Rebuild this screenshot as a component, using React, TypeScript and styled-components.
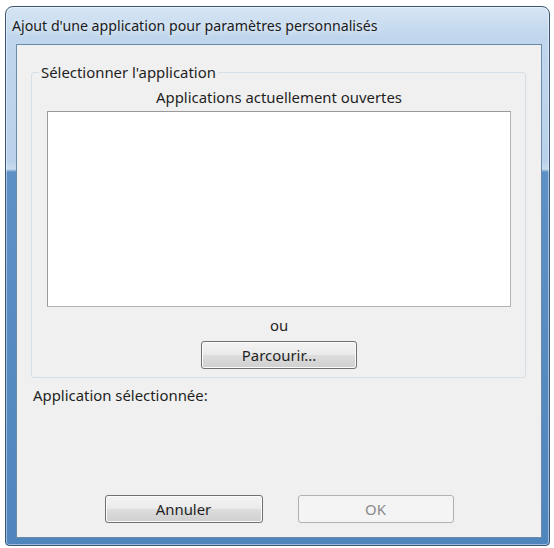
import React from "react";
import styled, { createGlobalStyle } from "styled-components";

const Global = createGlobalStyle`
  html, body { margin: 0; padding: 0; background: #ffffff; }
  body {
    font-family: "Noto Sans", "Open Sans", sans-serif;
    font-size: 14.9px;
    color: #1f1f1f;
  }
  * { box-sizing: border-box; }
`;

const Window = styled.div`
  margin: 6px 0 0 5px;
  width: 545px;
  height: 540px;
  border: 1px solid #3a5674;
  border-radius: 8px 8px 4px 4px;
  background: linear-gradient(
    to bottom,
    #d6e5f4 0px,
    #c0d6ec 30px,
    #b9d1ea 154px,
    #cadcee 162px,
    #5d91c6 165px,
    #4f85bd 100%
  );
  box-shadow: inset 0 0 0 1px rgba(255, 255, 255, 0.45);
  display: flex;
  flex-direction: column;
  overflow: hidden;
`;

const TitleBar = styled.div`
  height: 37px;
  display: flex;
  align-items: center;
  padding-left: 6px;
  font-size: 14.2px;
  color: #1b1b1b;
  text-shadow: 0 0 6px rgba(255, 255, 255, 0.9);
  white-space: nowrap;
`;

const Content = styled.div`
  flex: 1;
  margin: 0 7px 7px 10px;
  background: #f0f0f0;
  border: 1px solid #6b8aab;
  display: flex;
  flex-direction: column;
  padding-top: 18px;
`;

const GroupBox = styled.fieldset`
  margin: 0 15px 0 14px;
  padding: 0 14px 8px 15px;
  border: 1px solid #d5dfe5;
  border-radius: 3px;
  display: flex;
  flex-direction: column;
  align-items: stretch;
  min-width: 0;
`;

const Legend = styled.legend`
  margin-left: -8px;
  padding: 0 2px;
  line-height: 18px;
  white-space: nowrap;
`;

const Caption = styled.div<{ $top: number }>`
  line-height: 18px;
  text-align: center;
  margin-top: ${(p) => p.$top}px;
`;

const ListBox = styled.div`
  margin-top: 5px;
  height: 196px;
  background: #ffffff;
  border: 1px solid #9a9a9a;
  border-right-color: #b3b3b3;
  border-bottom-color: #b3b3b3;
`;

const Button = styled.button<{ $width: number }>`
  width: ${(p) => p.$width}px;
  height: 28px;
  padding: 0;
  font-family: inherit;
  font-size: 14.9px;
  color: #1f1f1f;
  border: 1px solid #707070;
  border-radius: 3px;
  background: linear-gradient(
    to bottom,
    #f3f3f3 0%,
    #ebebeb 48%,
    #dddddd 52%,
    #cfcfcf 100%
  );
  box-shadow: inset 0 0 0 1px #fbfbfb;

  &:disabled {
    color: #8a8a8a;
    border-color: #adb2b5;
    background: #f4f4f4;
    box-shadow: none;
  }
`;

const CenterRow = styled.div<{ $top: number; $gap?: number }>`
  display: flex;
  justify-content: center;
  gap: ${(p) => p.$gap ?? 0}px;
  margin-top: ${(p) => p.$top}px;
`;

const SelectedLabel = styled.div`
  margin: 8px 0 0 16px;
  line-height: 18px;
`;

const ButtonRow = styled(CenterRow)`
  margin-top: auto;
  margin-bottom: 14px;
`;

export default function App() {
  return (
    <>
      <Global />
      <Window>
        <TitleBar>Ajout d'une application pour paramètres personnalisés</TitleBar>
        <Content>
          <GroupBox>
            <Legend>Sélectionner l'application</Legend>
            <Caption $top={7}>Applications actuellement ouvertes</Caption>
            <ListBox />
            <Caption $top={9}>ou</Caption>
            <CenterRow $top={7}>
              <Button $width={156}>Parcourir...</Button>
            </CenterRow>
          </GroupBox>
          <SelectedLabel>Application sélectionnée:</SelectedLabel>
          <ButtonRow $top={0} $gap={35}>
            <Button $width={158}>Annuler</Button>
            <Button $width={156} disabled>
              OK
            </Button>
          </ButtonRow>
        </Content>
      </Window>
    </>
  );
}
